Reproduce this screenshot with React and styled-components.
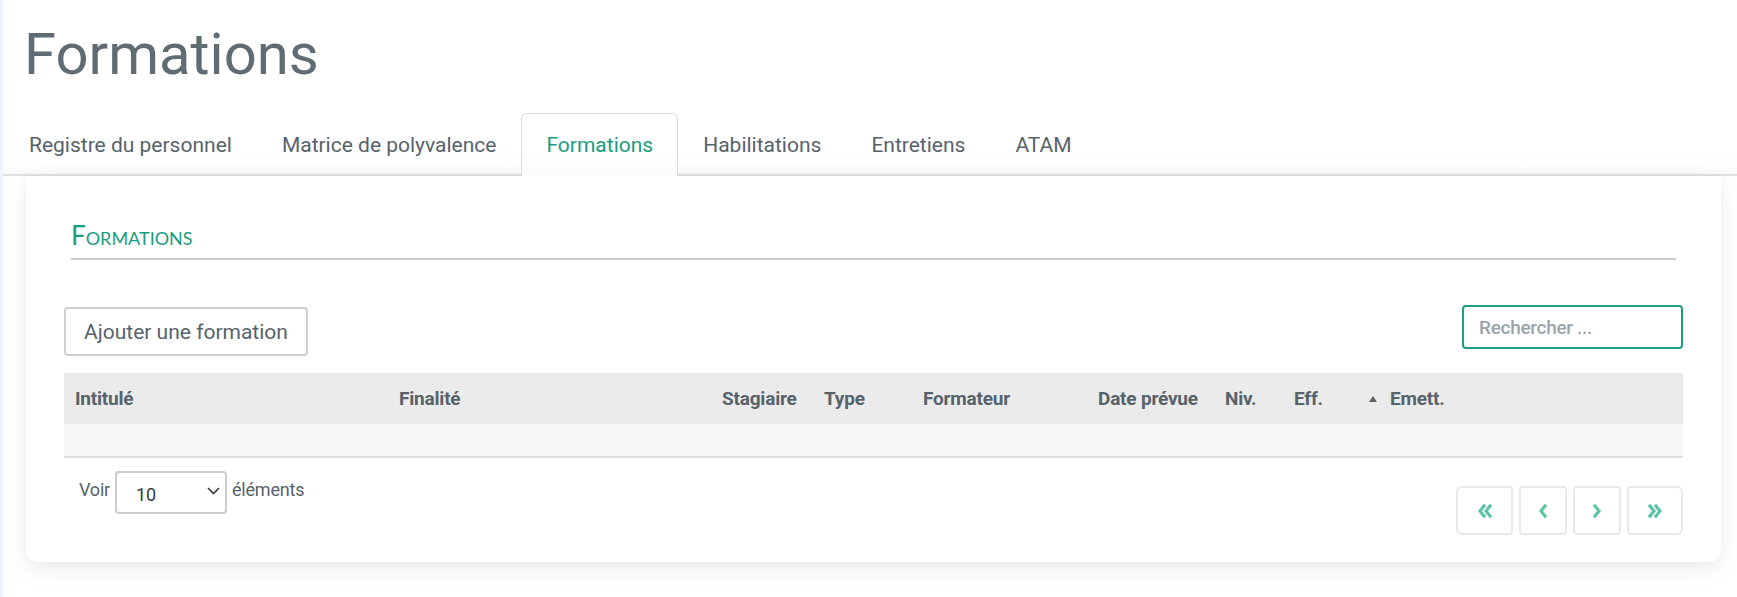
import React from "react";
import styled, { createGlobalStyle } from "styled-components";

const GlobalStyle = createGlobalStyle`
  html, body {
    margin: 0;
    padding: 0;
    background: #ffffff;
  }
  body {
    font-family: Roboto, "Liberation Sans", Arial, sans-serif;
    color: #5a666e;
  }
  * {
    box-sizing: border-box;
  }
`;

const Page = styled.div`
  min-height: 597px;
  border-left: 3px solid #eef3f9;
  padding-top: 19px;
`;

const PageTitle = styled.h1`
  margin: 0 0 24px 21px;
  font-family: Roboto, sans-serif;
  font-weight: 400;
  font-size: 58px;
  line-height: 70px;
  color: #5f6c73;
`;

const TabList = styled.ul`
  display: flex;
  margin: 0;
  padding: 0 0 0 1px;
  list-style: none;
  border-bottom: 2px solid #e0e0e0;
  background: linear-gradient(to bottom, #ffffff 70%, #fafafa 100%);
`;

const Tab = styled.li`
  padding: 19px 24px 16px;
  font-size: 21px;
  line-height: 25px;
  color: ${(p) => (p.$active ? "#1a9c80" : "#56636b")};
  border: 1px solid ${(p) => (p.$active ? "#dcdcdc" : "transparent")};
  border-bottom: none;
  border-radius: 6px 6px 0 0;
  margin-bottom: -2px;
  background: ${(p) =>
    p.$active ? "linear-gradient(to bottom, #ffffff 60%, #fafafa 100%)" : "transparent"};
  cursor: pointer;
  ${(p) => p.$active && `padding-bottom: 18px;`}
`;

const Card = styled.section`
  margin: 0 16px 0 23px;
  padding: 43px 38px 27px;
  background: #ffffff;
  border-radius: 0 0 10px 10px;
  box-shadow: 0 8px 22px rgba(0, 0, 0, 0.07), 0 0 10px rgba(0, 0, 0, 0.03);
`;

const SectionTitle = styled.h2`
  margin: 0 7px;
  padding-bottom: 7px;
  border-bottom: 2px solid #cccccc;
  font-family: Lato, sans-serif;
  font-variant: small-caps;
  font-weight: 400;
  font-size: 26px;
  line-height: 32px;
  color: #1a9c80;
`;

const Toolbar = styled.div`
  display: flex;
  justify-content: space-between;
  align-items: flex-start;
  margin-top: 45px;
  height: 51px;
`;

const Button = styled.button`
  margin-top: 2px;
  height: 49px;
  padding: 0 18px;
  background: #ffffff;
  border: 2px solid #cfcfcf;
  border-radius: 4px;
  font-family: Roboto, sans-serif;
  font-size: 21px;
  color: #56636b;
  cursor: pointer;
`;

const Search = styled.input`
  width: 221px;
  height: 44px;
  padding: 0 15px;
  border: 2px solid #1e9e84;
  border-radius: 4px;
  font-family: Roboto, sans-serif;
  font-weight: 500;
  font-size: 19px;
  letter-spacing: -0.3px;
  color: #56636b;
  outline: none;
  &::placeholder {
    color: #9aa4ab;
  }
`;

const Table = styled.table`
  width: 100%;
  margin-top: 17px;
  border-collapse: collapse;
  table-layout: fixed;
  border-bottom: 2px solid #dddddd;
`;

const HeadCell = styled.th`
  height: 51px;
  padding: 0 11px;
  background: #ebebeb;
  text-align: left;
  font-family: Roboto, sans-serif;
  font-weight: 700;
  font-size: 19px;
  letter-spacing: -0.2px;
  color: #56636b;
  white-space: nowrap;
`;

const SortMark = styled.span`
  display: inline-block;
  width: 0;
  height: 0;
  margin-right: 13px;
  vertical-align: 3px;
  border-left: 4px solid transparent;
  border-right: 4px solid transparent;
  border-bottom: 6px solid #56636b;
`;

const EmptyCell = styled.td`
  height: 33px;
  background: #f7f7f7;
`;

const Footer = styled.div`
  display: flex;
  justify-content: space-between;
  align-items: flex-start;
  padding-top: 13px;
`;

const Length = styled.label`
  display: flex;
  align-items: center;
  gap: 5px;
  padding-left: 15px;
  font-family: Roboto, sans-serif;
  font-size: 18px;
  letter-spacing: -0.2px;
  color: #56636b;
  & > span {
    margin-top: -6px;
  }
`;

const SelectWrap = styled.div`
  position: relative;
  width: 112px;
  height: 43px;
  & svg {
    position: absolute;
    right: 7px;
    top: 16px;
    pointer-events: none;
  }
`;

const Select = styled.select`
  appearance: none;
  width: 100%;
  height: 100%;
  padding: 4px 0 0 19px;
  background: #ffffff;
  border: 2px solid #cccccc;
  border-radius: 4px;
  font-family: Roboto, sans-serif;
  font-size: 18px;
  color: #333a3f;
  outline: none;
`;

const Pager = styled.nav`
  display: flex;
  gap: 6px;
  margin-top: 15px;
`;

const PageButton = styled.button`
  width: ${(p) => p.$w}px;
  height: 49px;
  display: flex;
  align-items: center;
  justify-content: center;
  padding: 0;
  background: #ffffff;
  border: 2px solid #e9e9e9;
  border-radius: ${(p) => p.$radius};
  cursor: pointer;
`;

const Chevron = ({ dir, double }) => {
  const pts =
    dir === "left"
      ? ["7,3 3,8 7,13", "13,3 9,8 13,13"]
      : ["3,3 7,8 3,13", "9,3 13,8 9,13"];
  const list = double ? pts : [dir === "left" ? "10,3 6,8 10,13" : "6,3 10,8 6,13"];
  return (
    <svg width="16" height="16" viewBox="0 0 16 16">
      {list.map((p) => (
        <polyline
          key={p}
          points={p}
          fill="none"
          stroke="#5cc5a7"
          strokeWidth="3.2"
          strokeLinecap="square"
          strokeLinejoin="miter"
        />
      ))}
    </svg>
  );
};

const tabs = [
  "Registre du personnel",
  "Matrice de polyvalence",
  "Formations",
  "Habilitations",
  "Entretiens",
  "ATAM",
];

const columns = [
  { label: "Intitulé", w: 324 },
  { label: "Finalité", w: 323 },
  { label: "Stagiaire", w: 102 },
  { label: "Type", w: 99 },
  { label: "Formateur", w: 175 },
  { label: "Date prévue", w: 127 },
  { label: "Niv.", w: 69 },
  { label: "Eff.", w: 75 },
  { label: "Emett.", sorted: true },
];

export default function App() {
  return (
    <>
      <GlobalStyle />
      <Page>
        <PageTitle>Formations</PageTitle>
        <TabList>
          {tabs.map((t) => (
            <Tab key={t} $active={t === "Formations"}>
              {t}
            </Tab>
          ))}
        </TabList>
        <Card>
          <SectionTitle>Formations</SectionTitle>
          <Toolbar>
            <Button>Ajouter une formation</Button>
            <Search placeholder="Rechercher ..." />
          </Toolbar>
          <Table>
            <colgroup>
              {columns.map((c) => (
                <col key={c.label} style={c.w ? { width: c.w } : undefined} />
              ))}
            </colgroup>
            <thead>
              <tr>
                {columns.map((c) => (
                  <HeadCell key={c.label}>
                    {c.sorted && <SortMark />}
                    {c.label}
                  </HeadCell>
                ))}
              </tr>
            </thead>
            <tbody>
              <tr>
                <EmptyCell colSpan={columns.length} />
              </tr>
            </tbody>
          </Table>
          <Footer>
            <Length>
              <span>Voir</span>
              <SelectWrap>
                <Select defaultValue="10">
                  <option>10</option>
                  <option>25</option>
                  <option>50</option>
                  <option>100</option>
                </Select>
                <svg width="13" height="8" viewBox="0 0 13 8">
                  <polyline points="1,1 6.5,6.5 12,1" fill="none" stroke="#333a3f" strokeWidth="1.6" />
                </svg>
              </SelectWrap>
              <span>éléments</span>
            </Length>
            <Pager>
              <PageButton $w={57} $radius="6px 4px 4px 6px">
                <Chevron dir="left" double />
              </PageButton>
              <PageButton $w={48} $radius="4px">
                <Chevron dir="left" />
              </PageButton>
              <PageButton $w={48} $radius="4px">
                <Chevron dir="right" />
              </PageButton>
              <PageButton $w={56} $radius="4px 6px 6px 4px">
                <Chevron dir="right" double />
              </PageButton>
            </Pager>
          </Footer>
        </Card>
      </Page>
    </>
  );
}
